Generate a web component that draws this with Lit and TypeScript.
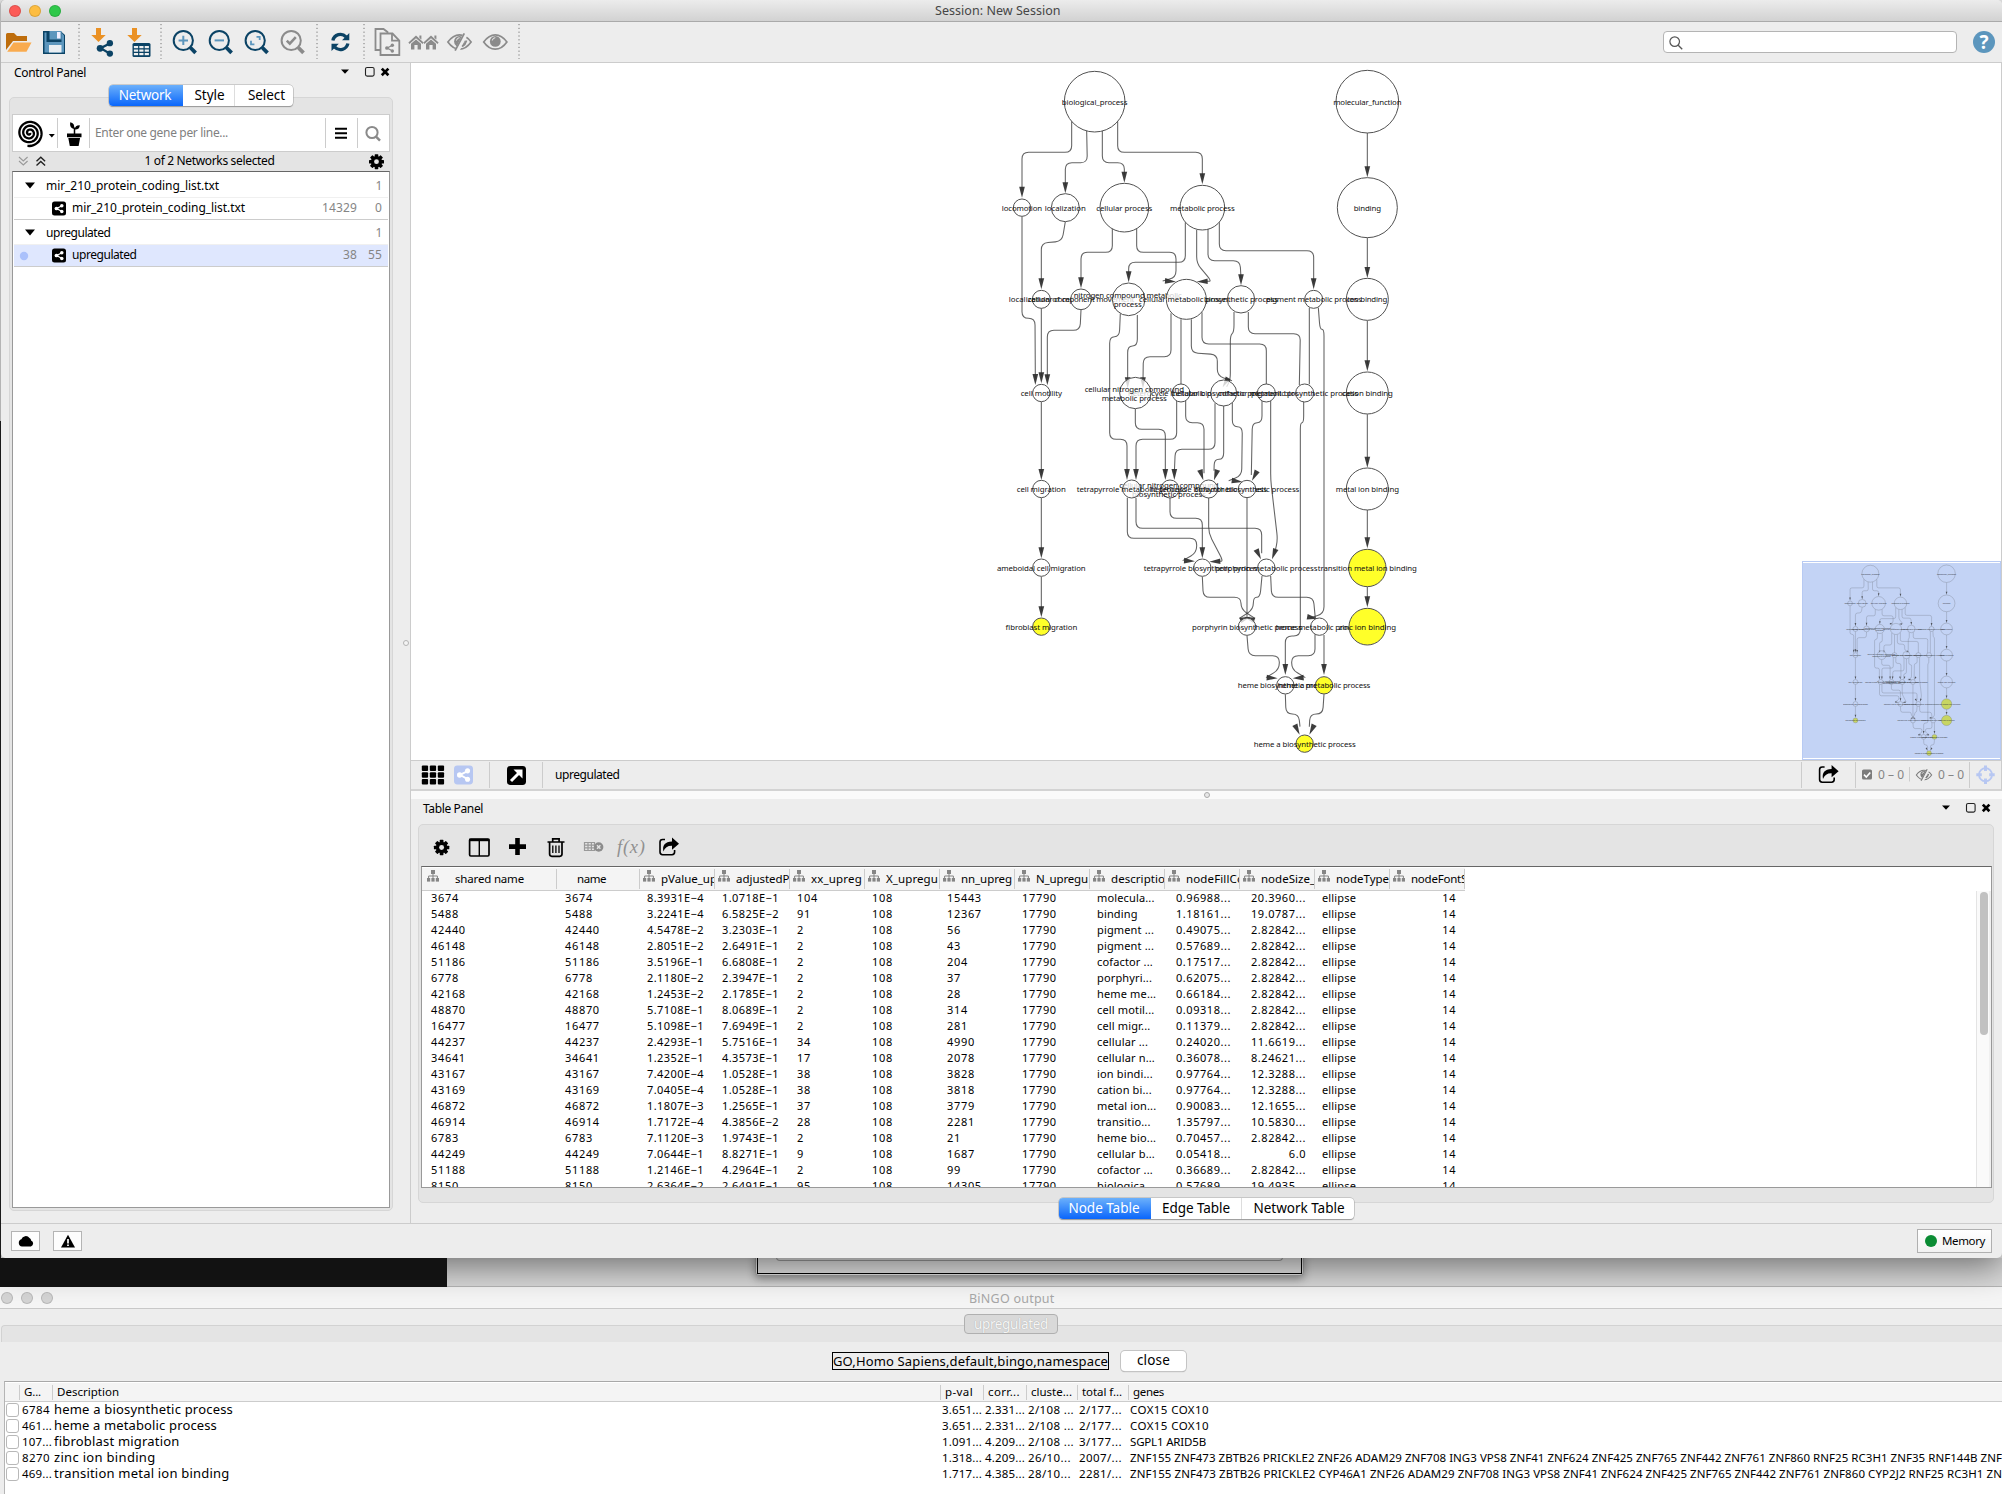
import { LitElement, html, svg, css } from "lit";
import { customElement } from "lit/decorators.js";

const FACE = '"Noto Sans", "Open Sans", sans-serif';
const UI_FACE = 'Inter, Roboto, sans-serif';

/* Letter spacing that brings a run of text to a given width. */
const pen = document.createElement("canvas").getContext("2d")!;
function fit(text: string, width: number, size: number, cls = "", face = FACE) {
  pen.font = `${size}px ${face}`;
  const gap = (width - pen.measureText(text).width) / text.length;
  return html`<span class="fit ${cls}" style="font-size:${size}px;letter-spacing:${gap.toFixed(3)}px">${text}</span>`;
}

/* Icon cut from a shared coordinate space. */
function ic(x: number, y: number, w: number, h: number, body: unknown) {
  return html`<svg class="ic" width=${w} height=${h} viewBox="${x} ${y} ${w} ${h}">${body}</svg>`;
}

type Pt = [number, number];
function round(pts: Pt[], r = 20) {
  let d = `M${pts[0][0]} ${pts[0][1]}`;
  for (let i = 1; i < pts.length - 1; i++) {
    const [a, b, c] = [pts[i - 1], pts[i], pts[i + 1]];
    const la = Math.hypot(a[0] - b[0], a[1] - b[1]);
    const lc = Math.hypot(c[0] - b[0], c[1] - b[1]);
    const ra = Math.min(r, la / 2), rc = Math.min(r, lc / 2);
    d += `L${b[0] + ((a[0] - b[0]) * ra) / la} ${b[1] + ((a[1] - b[1]) * ra) / la}`;
    d += `Q${b[0]} ${b[1]} ${b[0] + ((c[0] - b[0]) * rc) / lc} ${b[1] + ((c[1] - b[1]) * rc) / lc}`;
  }
  const e = pts[pts.length - 1];
  return d + `L${e[0]} ${e[1]}`;
}

interface Edge { p: Pt[]; tip?: [number, number, number]; }
const E = (p: Pt[], tip?: [number, number, number]): Edge => ({ p, tip });
const down = (...p: Pt[]): Edge => {
  const e = p[p.length - 1];
  return { p: [...p.slice(0, -1), [e[0], e[1] - 22]], tip: [e[0], e[1], 90] };
};

const edges: Edge[] = [
  down([275, 214], [275, 307], [126, 307], [126, 443]),
  down([320, 243], [322, 338], [256, 338], [256, 430]),
  down([367, 243], [367, 338], [433, 338], [433, 398]),
  down([413, 214], [413, 307], [667, 307], [667, 403]),
  down([1162, 249], [1162, 382]),
  down([1162, 563], [1162, 684]),
  down([1162, 812], [1162, 964]),
  down([1162, 1093], [1162, 1253]),
  down([1162, 1380], [1162, 1495]),
  down([1162, 1611], [1162, 1672]),
  down([126, 500], [126, 805], [165, 805], [166, 1005]),
  down([256, 515], [246, 574], [184, 579], [184, 718]),
  down([397, 536], [397, 607], [303, 607], [303, 715]),
  E([[470, 536], [470, 607], [588, 607], [588, 682], [548, 693]], [588, 695, 4]),
  down([616, 517], [616, 637], [446, 637], [446, 697]),
  E([[650, 540], [650, 640], [695, 694], [680, 694]], [650, 695, 178]),
  down([684, 537], [684, 632], [780, 632], [783, 706]),
  down([718, 517], [718, 602], [1001, 602], [1001, 718]),
  down([184, 775], [184, 1000]),
  down([303, 780], [300, 841], [202, 841], [202, 1006]),
  down([421, 790], [418, 860], [389, 860], [389, 1168], [441, 1168], [441, 1290]),
  down([472, 795], [472, 888], [443, 888], [443, 1015]),
  down([573, 790], [573, 920], [490, 920], [489, 1015]),
  E([[603, 808], [603, 1003]]),
  E([[634, 808], [634, 908], [712, 914], [712, 978], [756, 992]], [728, 1012, 120]),
  E([[666, 787], [666, 882], [859, 882], [859, 1003]]),
  E([[762, 786], [762, 846], [751, 856], [751, 990], [740, 1010]]),
  E([[805, 786], [805, 851], [961, 851], [958, 1005]]),
  E([[988, 773], [988, 1003]]),
  E([[1015, 773], [1020, 838], [1032, 838], [1032, 1690], [990, 1704]], [1014, 1706, 10]),
  down([184, 1056], [184, 1290]),
  down([184, 1343], [184, 1525]),
  down([184, 1580], [184, 1702]),
  down([466, 1077], [466, 1138], [556, 1138], [556, 1290]),
  down([590, 1053], [590, 1168], [468, 1168], [468, 1290]),
  E([[617, 1053], [617, 1118], [672, 1118], [672, 1270]], [670, 1291, 72]),
  down([705, 1060], [705, 1198], [586, 1198], [583, 1290]),
  E([[731, 1067], [731, 1228], [703, 1228], [702, 1262]], [702, 1291, 108]),
  E([[757, 1058], [757, 1130], [787, 1130], [785, 1277], [746, 1292]], [788, 1296, 8]),
  E([[846, 1053], [846, 1118], [817, 1118], [814, 1275]], [816, 1292, 118]),
  E([[872, 1053], [872, 1290], [893, 1470], [885, 1505]], [876, 1528, 110]),
  down([971, 1056], [971, 1118], [961, 1118], [961, 1758], [916, 1758], [916, 1875]),
  E([[442, 1343], [442, 1465], [650, 1465], [650, 1508], [608, 1532]], [645, 1534, 4]),
  E([[468, 1343], [468, 1435], [845, 1435], [845, 1510]], [843, 1528, 64]),
  down([570, 1343], [570, 1405], [667, 1405], [667, 1525]),
  E([[686, 1343], [686, 1450], [730, 1534], [715, 1534]], [688, 1535, 178]),
  E([[801, 1343], [801, 1705]]),
  E([[667, 1580], [670, 1642], [783, 1642], [783, 1678], [825, 1705]], [792, 1700, 200]),
  E([[846, 1578], [840, 1642], [820, 1642], [820, 1678], [778, 1705]], [812, 1700, -20]),
  E([[872, 1578], [875, 1642], [1000, 1642], [1006, 1705]]),
  E([[801, 1757], [806, 1817], [898, 1817], [898, 1858], [858, 1883]], [893, 1885, 4]),
  E([[1005, 1753], [1005, 1817], [935, 1817], [935, 1858], [976, 1883]], [938, 1885, 176]),
  down([1032, 1755], [1032, 1875]),
  E([[916, 1933], [918, 1992], [956, 1992], [960, 2030]], [959, 2054, 64]),
  E([[1032, 1933], [1028, 1992], [990, 1992], [988, 2030]], [988, 2054, 116]),
];

type Line = [string, number, number, number]; // text, centre x, centre y, width
interface GNode { x: number; y: number; r: number; hot?: boolean; t: Line[]; }
const n = (x: number, y: number, r: number, s: string, w: number, hot = false): GNode =>
  ({ x, y, r, hot, t: [[s, x, y, w]] });

const nodes: GNode[] = [
  n(344, 155, 91, "biological_process", 197),
  n(1162, 155, 94, "molecular_function", 205),
  n(126, 473, 26, "locomotion", 121),
  n(256, 473, 42, "localization", 123),
  n(433, 473, 73, "cellular process", 168),
  n(667, 473, 67, "metabolic process", 194),
  n(1162, 473, 90, "binding", 82),
  n(1162, 748, 63, "ion binding", 120),
  n(1162, 1029, 63, "cation binding", 153),
  n(184, 748, 27, "localization of cell", 196),
  n(303, 748, 31, "cellular component movement", 320),
  { x: 446, y: 748, r: 49, t: [["nitrogen compound metabolic", 443, 736, 324], ["process", 443, 762, 84]] },
  n(619, 748, 60, "cellular metabolic process", 284),
  n(783, 748, 41, "biosynthetic process", 222),
  n(1001, 748, 27, "pigment metabolic process", 288),
  n(184, 1029, 26, "cell motility", 124),
  n(603, 1029, 27, "heterocycle metabolic process", 318),
  { x: 466, y: 1029, r: 47, t: [["cellular nitrogen compound", 463, 1017, 298], ["metabolic process", 463, 1043, 195]] },
  n(731, 1029, 39, "cellular biosynthetic process", 310),
  n(859, 1029, 27, "cofactor metabolic process", 290),
  n(974, 1029, 27, "pigment biosynthetic process", 322),
  n(184, 1317, 26, "cell migration", 147),
  { x: 570, y: 1317, r: 27, t: [["cellular nitrogen compound", 567, 1305, 298], ["biosynthetic process", 567, 1331, 222]] },
  n(455, 1317, 27, "tetrapyrrole metabolic process", 330),
  n(686, 1317, 27, "heterocycle biosynthetic process", 350),
  n(801, 1317, 26, "cofactor biosynthetic process", 314),
  n(1162, 1317, 63, "metal ion binding", 190),
  n(184, 1553, 26, "ameboidal cell migration", 266),
  n(667, 1553, 26, "tetrapyrrole biosynthetic process", 352),
  n(859, 1553, 26, "porphyrin metabolic process", 307),
  n(1162, 1554, 56, "transition metal ion binding", 297, true),
  n(184, 1730, 26, "fibroblast migration", 215, true),
  n(801, 1730, 26, "porphyrin biosynthetic process", 330),
  n(1018, 1730, 26, "heme metabolic process", 262),
  n(1162, 1730, 55, "zinc ion binding", 173, true),
  n(916, 1906, 26, "heme biosynthetic process", 286),
  n(1032, 1906, 26, "heme a metabolic process", 278, true),
  n(974, 2081, 26, "heme a biosynthetic process", 306, true),
];

function graph(mini = false) {
  return svg`
    <g fill="none" stroke="#3c3c3c" stroke-opacity=".8" stroke-width="3.2">
      ${edges.map((e) => svg`<path d=${round(e.p)}/>`)}
    </g>
    <g fill="#2c2c2c" fill-opacity=".92">
      ${edges.filter((e) => e.tip).map((e) => svg`<path d="M0 0L-33 8.5L-33 -8.5Z" transform="translate(${e.tip![0]} ${e.tip![1]}) rotate(${e.tip![2]})"/>`)}
    </g>
    ${nodes.map((k) => svg`
      <circle cx=${k.x} cy=${k.y} r=${k.r} fill=${k.hot ? (mini ? "#c8d638" : "#ffff1e") : (mini ? "#c3d3f5" : "#ffffff")} fill-opacity=${k.hot ? 0.95 : 0.78} stroke="#505050" stroke-width="3"/>
      ${k.t.map((t) => svg`<text x=${t[1] - t[3] / 2} y=${t[2] + 9} textLength=${t[3]} font-size="23.5" fill="#111">${t[0]}</text>`)}`)}`;
}

const NAVY = "#0b4365", BLUE = "#5c96bd", ORANGE = "#ea9124", GREY = "#8b8b8b";

const share = (x: number, y: number, s: number, c: string) => svg`
  <g transform="translate(${x} ${y}) scale(${s})" fill=${c} stroke=${c}>
    <path d="M13 4.2L4.5 8.5L13 13.4" fill="none" stroke-width="2.2"/>
    <circle cx="13.6" cy="3.6" r="3.1" stroke="none"/><circle cx="4" cy="8.6" r="3.3" stroke="none"/><circle cx="13.6" cy="13.8" r="3.1" stroke="none"/>
  </g>`;
const importArrow = (x: number) => svg`<path d="M${x - 2.5} 28h5v7h4.7L${x} 42L${x - 7.2} 35h4.7z" fill=${ORANGE}/>`;
const lens = (x: number, c: string, inner: unknown) => svg`
  <circle cx=${x} cy="40.5" r="9.6" fill="none" stroke=${c} stroke-width="2"/>
  <path d="M${x + 7} 47.5L${x + 12.3} 52.8" stroke=${c} stroke-width="3.8" fill="none"/>${inner}`;
const sep = (x: number) => ic(x, 22, 10, 40, svg`<path d="M${x + 5} 24v35" stroke="#777" stroke-width="1" stroke-dasharray="1.2 2.6"/>`);
const eye = (cx: number, cy: number, s: number, c: string, slash: boolean) => svg`
  <g transform="translate(${cx} ${cy}) scale(${s})">
    <path d="M-11.6 0Q-6.5 -7.2 0 -7.2T11.6 0Q6.5 7.2 0 7.2T-11.6 0Z" fill="none" stroke=${c} stroke-width="1.7"/>
    <circle r="5.4" cy="-.6" fill=${c}/><path d="M-3 -1.5A3.2 3.2 0 0 1 0 -4.3" stroke="#eee" fill="none"/>
    ${slash ? svg`<path d="M6.5 -9L-2.5 9" stroke="#eee" stroke-width="4.6"/><path d="M4.8 -8.6L-4.4 8.6" stroke=${c} stroke-width="1.8"/><path d="M7 -1.5Q6 2.5 2.6 4.6" stroke=${c} stroke-width="1.8" fill="none"/>` : ""}
  </g>`;
const gear = (cx: number, cy: number, r: number) => svg`
  <g transform="translate(${cx} ${cy}) scale(${r / 7.5})">
    ${[0, 45, 90, 135].map((a) => svg`<rect x="-1.8" y="-7.5" width="3.6" height="15" rx=".6" transform="rotate(${a})"/>`)}
    <path fill-rule="evenodd" d="M-5.6 0a5.6 5.6 0 1 0 11.2 0a5.6 5.6 0 1 0 -11.2 0M-2.4 0a2.4 2.4 0 1 1 4.8 0a2.4 2.4 0 1 1 -4.8 0"/>
    <circle r="2.4" class="hole"/>
  </g>`;
const exportIcon = (x: number, y: number) => svg`
  <path d="M${x + 6} ${y + 2}h-2.4q-2.6 0-2.6 2.6v10q0 2.6 2.6 2.6h9.4q2.6 0 2.6-2.6v-2" fill="none" stroke="#000" stroke-width="1.6"/>
  <path d="M${x + 4.4} ${y + 14}q-2-9.4 8.6-10v-4l7 6.2l-7 6v-4q-6.4-.2-8.6 5.8z"/>`;
const tree = html`<svg class="tree" width="12" height="12" viewBox="0 0 12 12"><g fill="#858585"><rect x="4" y="0" width="4" height="4"/><rect x="0" y="8" width="3.2" height="3.6"/><rect x="4.4" y="8" width="3.2" height="3.6"/><rect x="8.8" y="8" width="3.2" height="3.6"/></g><path d="M6 3v5M1.6 8V6h8.8v2" fill="none" stroke="#858585"/></svg>`;
const panelIcons = html`<svg class="ic" width="54" height="16" viewBox="339 65 54 16">
  <path d="M341 70.5h8l-4 4.3z"/><rect x="365.5" y="68.5" width="8.6" height="8.6" rx="1.6" fill="none" stroke="#222" stroke-width="1.1"/>
  <path d="M381.8 69.6l6.6 6.6M388.4 69.6l-6.6 6.6" stroke="#000" stroke-width="2.7"/></svg>`;

const cols = ["pValue_up", "adjustedP'", "xx_upreg", "X_upregu", "nn_upreg", "N_upregu", "descriptio", "nodeFillCo", "nodeSize_", "nodeType", "nodeFontS"];
const rows: string[][] = `3674|8.3931E-4|1.0718E-1|104|15443|molecula...|0.96988...|20.3960...
5488|3.2241E-4|6.5825E-2|91|12367|binding|1.18161...|19.0787...
42440|4.5478E-2|3.2303E-1|2|56|pigment ...|0.49075...|2.82842...
46148|2.8051E-2|2.6491E-1|2|43|pigment ...|0.57689...|2.82842...
51186|3.5196E-1|6.6808E-1|2|204|cofactor ...|0.17517...|2.82842...
6778|2.1180E-2|2.3947E-1|2|37|porphyri...|0.62075...|2.82842...
42168|1.2453E-2|2.1785E-1|2|28|heme me...|0.66184...|2.82842...
48870|5.7108E-1|8.0689E-1|2|314|cell motil...|0.09318...|2.82842...
16477|5.1098E-1|7.6949E-1|2|281|cell migr...|0.11379...|2.82842...
44237|2.4293E-1|5.7516E-1|34|4990|cellular ...|0.24020...|11.6619...
34641|1.2352E-1|4.3573E-1|17|2078|cellular n...|0.36078...|8.24621...
43167|7.4200E-4|1.0528E-1|38|3828|ion bindi...|0.97764...|12.3288...
43169|7.0405E-4|1.0528E-1|38|3818|cation bi...|0.97764...|12.3288...
46872|1.1807E-3|1.2565E-1|37|3779|metal ion...|0.90083...|12.1655...
46914|1.7172E-4|4.3856E-2|28|2281|transitio...|1.35797...|10.5830...
6783|7.1120E-3|1.9743E-1|2|21|heme bio...|0.70457...|2.82842...
44249|7.0644E-1|8.8271E-1|9|1687|cellular b...|0.05418...|6.0
51188|1.2146E-1|4.2964E-1|2|99|cofactor ...|0.36689...|2.82842...
8150|2.6364E-2|2.6491E-1|95|14305|biologica...|0.57689...|19.4935...`
  .split("\n").map((l) => l.replace(/E-/g, "E\u2212").split("|"));

const G1 = "ZNF155 ZNF473 ZBTB26 PRICKLE2 ZNF26 ADAM29 ZNF708 ING3 VPS8 ZNF41 ZNF624 ZNF425 ZNF765 ZNF442 ZNF761 ZNF860 RNF25 RC3H1 ZNF35 RNF144B";
const G2 = "ZNF155 ZNF473 ZBTB26 PRICKLE2 CYP46A1 ZNF26 ADAM29 ZNF708 ING3 VPS8 ZNF41 ZNF624 ZNF425 ZNF765 ZNF442 ZNF761 ZNF860 CYP2J2 RNF25 RC3H1";
const results: [string, string, number, string, string, string, string, string, number][] = [
  ["6784", "heme a biosynthetic process", 179, "3.651...", "2.331...", "2/108 ...", "2/177...", "COX15 COX10", 79],
  ["461...", "heme a metabolic process", 163, "3.651...", "2.331...", "2/108 ...", "2/177...", "COX15 COX10", 79],
  ["107...", "fibroblast migration", 125.5, "1.091...", "4.209...", "2/108 ...", "3/177...", "SGPL1 ARID5B", 76],
  ["8270", "zinc ion binding", 101.5, "1.318...", "4.209...", "26/10...", "2007/...", G1, 849.5],
  ["469...", "transition metal ion binding", 175.5, "1.717...", "4.385...", "28/10...", "2281/...", G2, 854],
];

@customElement("app-root")
export class AppRoot extends LitElement {
  static styles = css`
    :host { display: block; width: 2002px; height: 1494px; overflow: hidden; font-family: "Noto Sans", "Open Sans", sans-serif; font-size: 11px; color: #000; background: #ededed; }
    * { box-sizing: border-box; }
    .fit { white-space: pre; line-height: 1; display: inline-block; }
    .ic { display: block; flex: none; }
    .main { position: relative; z-index: 1; width: 2002px; height: 1258px; background: #ededed; border-left: 1px solid #b5b5b5; border-radius: 5px 5px 5px 5px; display: flex; flex-direction: column; border-bottom: 0; box-shadow: 0 8px 34px rgba(0,0,0,.5); }
    .title { height: 22px; flex: none; background: linear-gradient(#ececec, #d2d2d2); border-bottom: 1px solid #aaa; border-radius: 5px 5px 0 0; display: grid; grid-template-columns: 934px 1fr; align-items: center; }
    .title .fit { color: #464646; position: relative; top: 1px; }
    .lights { display: flex; gap: 8px; padding-left: 8px; }
    .lights i { width: 12px; height: 12px; border-radius: 50%; background: #fc5b57; box-shadow: inset 0 0 0 1px rgba(0,0,0,.13); }
    .lights i:nth-child(2) { background: #fdbd41; } .lights i:nth-child(3) { background: #2fc84a; }
    .tools { height: 41px; flex: none; border-bottom: 1px solid #ccc; display: flex; }
    .grow { flex: 1; }
    .search { width: 294px; height: 22px; margin-top: 9px; border: 1px solid #b4b4b4; border-radius: 4px; background: #fff; }
    .help { width: 22px; height: 22px; border-radius: 50%; background: #5c96bd; color: #fff; font: bold 19px/22px "Open Sans", sans-serif; text-align: center; margin: 9px 7px 0 16px; }
    .body { flex: 1; min-height: 0; display: grid; grid-template-columns: 410px 1fr; }
    .left { border-right: 1px solid #ccc; padding-left: 8px; display: flex; flex-direction: column; }
    .phead { display: flex; justify-content: space-between; height: 22px; padding: 1px 17px 0 5px; }
    .phead .fit { margin-top: 3px; }
    .tabs { display: flex; height: 21px; border-radius: 4px; background: #fff; box-shadow: 0 0 0 .5px #a9a9a9, 0 1px 1px rgba(0,0,0,.4); overflow: hidden; position: relative; z-index: 1; }
    .tabs span.tab { display: flex; align-items: center; justify-content: center; border-right: 1px solid #ddd; }
    .tabs span.tab:last-child { border: 0; padding-left: 2px; }
    .tabs .tab.on { background: linear-gradient(#6bb0fb, #0a66fb); color: #fff; border: 0; padding-right: 2px; }
    .t1 { width: 184px; margin: 0 0 -9px 100px; display: grid; grid-template-columns: 74px 52px 58px; }
    .t1 .tab:nth-child(2) { padding-left: 2px; }
    .t1 span.tab:last-child { padding-left: 5px; }
    .frame { background: #e4e4e4; border: 1px solid #d6d6d6; border-radius: 5px; }
    .f1 { width: 384px; height: 1114px; padding: 16px 2px 2px; display: flex; flex-direction: column; }
    .gene { height: 38px; border: 1px solid #ccc; background: #fff; display: grid; grid-template-columns: 45px 32px 236px 32px 1fr; align-items: center; flex: none; }
    .gene > * { height: 30px; border-right: 1px solid #ccc; display: flex; align-items: center; }
    .gene > *:last-child { border: 0; }
    .gene .fit { color: #808080; padding-left: 5px; }
    .count { height: 19px; flex: none; display: flex; align-items: center; justify-content: space-between; }
    .count .fit { margin: -1px -2px 0 0; }
    .hole { fill: #e4e4e4; }
    .list { flex: 1; background: #fff; border: 1px solid #999; border-top-color: #666; padding: 1px 1px 0; }
    .net { display: grid; grid-template-columns: 1fr auto; height: 25px; align-items: center; border-bottom: 1px solid #f0f0f0; padding: 1px 6px 0 0; }
    .net.leaf { height: 22px; border-bottom-color: #ccc; padding-top: 0; }
    .net.leaf .fit { margin-top: -1px; }
    .net.sel { background: #dfe7fe; }
    .net > div { display: flex; align-items: center; }
    .num { color: #858585; }
    .num .fit:nth-child(2) { min-width: 25px; text-align: right; }
    .right { min-width: 0; display: flex; flex-direction: column; }
    .view { height: 698px; flex: none; position: relative; background: #fff; border-bottom: 1px solid #ccc; border-right: 1px solid #ccc; }
    .view > svg { display: block; }
    svg text { font-family: "Noto Sans", "Open Sans", sans-serif; }
    .mini { position: absolute; right: 0; bottom: 0; width: 199px; height: 199px; background: #c3d3f5; border: 1px solid #b7caf3; box-shadow: inset 0 1px #fff, inset 0 -1px #fff; }
    .mini svg { display: block; }
    .vbar { height: 30px; flex: none; display: flex; align-items: center; border-bottom: 2px solid #d3d3d3; border-right: 1px solid #ccc; }
    .v { width: 1px; height: 26px; background: #ccc; flex: none; }
    .vname { padding-left: 12px; display: flex; }
    .cnt { color: #858585; }
    .split { height: 8px; flex: none; background: #fafafa; display: flex; justify-content: center; align-items: center; }
    .split i { width: 6px; height: 6px; border-radius: 50%; border: 1px solid #aaa; background: #e8e8e8; }
    .vsplit { position: absolute; left: 402px; top: 640px; width: 6px; height: 6px; border-radius: 50%; border: 1px solid #b4b4b4; background: #f4f4f4; }
    .thead { display: flex; justify-content: space-between; height: 25px; padding: 1px 8px 0 12px; }
    .thead .fit { margin-top: 3px; }
    .f2 { margin: 0 8px 0 7px; height: 379px; flex: none; padding: 0 1px 0 2px; }
    .ttools { height: 41px; display: flex; align-items: center; padding-top: 3px; }
    .table { height: 322px; border: 1px solid #999; border-top-color: #666; background: #fff; overflow: hidden; display: grid; grid-template-columns: 1fr 15px; }
    .hr, .row { display: grid; grid-template-columns: 135px 83px repeat(11, 75px); width: 1043px; }
    .hr { height: 24px; background: #f4f4f4; border-bottom: 1px solid #ccc; border-top: 1px solid #fff; }
    .hc { border-right: 1px solid #ccc; height: 20px; margin-top: 1px; overflow: hidden; white-space: nowrap; display: flex; padding-left: 3px; }
    .hc .fit { margin: 4px 0 0 6px; line-height: 12px; }
    .hc:first-child .fit { margin-left: 16px; } .hc:first-child { padding-left: 5px; }
    .tree { flex: none; margin-top: 1px; }
    .hc.nm .fit { margin-left: 17px; }
    .row { height: 16px; line-height: 13px; }
    .row span { padding-left: 7px; white-space: nowrap; letter-spacing: .67px; }
    .row span:first-child { padding-left: 9px; } .row span:nth-child(2) { padding-left: 8px; }
    .row span.exp { letter-spacing: .42px; }
    .row span.txt { letter-spacing: .15px; }
    .row span.r { text-align: right; padding-right: 9px; letter-spacing: .55px; }
    .bar { border-left: 1px solid #e4e4e4; border-right: 2px solid #f0f0f0; background: #fafafa; margin-top: 24px; padding: 1px 3px; }
    .bar i { display: block; width: 8px; height: 143px; border-radius: 4px; background: #c1c1c1; }
    .t2 { width: 295px; margin: -5px 0 0 648px; display: grid; grid-template-columns: 92px 91px 112px; flex: none; }
    .status { height: 35px; flex: none; border-top: 1px solid #ccc; display: flex; align-items: center; padding: 0 10px 1px 10px; }
    .sb { width: 29px; height: 20px; border: 1px solid #b4b4b4; background: #fdfdfd; margin-right: 13px; display: flex; align-items: center; justify-content: center; }
    .mem { width: 75px; height: 24px; border: 1px solid #b0b0b0; background: linear-gradient(#fff, #f2f2f2); display: flex; align-items: center; padding-left: 7px; gap: 5px; }
    .mem i { width: 12px; height: 12px; border-radius: 50%; background: #0b8c34; }
    .behind { height: 29px; display: grid; grid-template-columns: 447px 1fr; position: relative; }
    .dark { background: #121212; z-index: 2; } 
    .desk { background: #d9d9d9; border-bottom: 1px solid #b5b5b5; }
    .dialog { position: absolute; left: 755px; top: -6px; width: 549px; height: 24px; border: 1px solid #a0a0a0; border-radius: 0 0 4px 4px; background: #e6e6e6; padding: 0 1px 2px; box-shadow: 0 3px 9px rgba(0,0,0,.35); }
    .dialog div { height: 21px; border: 1px solid #000; border-top: 0; padding: 0 18px; }
    .dialog b { display: block; height: 8px; border: 1px solid #a0a0a0; border-top: 0; border-radius: 0 0 4px 4px; }
    .edge { position: absolute; z-index: 3; left: 0; top: 421px; width: 1px; height: 837px; background: #1a1a1a; }
    .bingo { height: 207px; background: #ededed; display: flex; flex-direction: column; }
    .btitle { height: 22px; background: #f5f5f5; border-bottom: 1px solid #c8c8c8; display: grid; grid-template-columns: 969px 1fr; align-items: center; flex: none; }
    .btitle .fit { color: #a5a5a5; position: relative; z-index: 2; top: 2px; }
    .btitle .lights { padding-left: 1px; } .btitle .lights i { background: #d4d4d4 !important; }
    .btab { width: 94px; height: 20px; margin: 5px 0 -9px 964px; border: 1px solid #b0b0b0; border-radius: 4px; background: #d9d9d9; color: #f6f6f6; text-shadow: 0 0 1px #999; display: flex; justify-content: center; padding-top: 3px; z-index: 2; position: relative; flex: none; }
    .band { height: 17px; margin-left: 1px; background: #e4e4e4; border-top: 1px solid #d2d2d2; border-left: 1px solid #d2d2d2; border-radius: 4px 0 0 0; flex: none; }
    .bform { height: 39px; display: flex; padding: 10px 0 0 832px; flex: none; }
    .field { width: 277px; height: 18px; border: 1px solid #000; overflow: hidden; padding-top: 1px; line-height: 14px; margin-right: 12px; }
    .field .fit { line-height: 14px; display: block; }
    .close { width: 65px; height: 20px; margin-top: -1px; background: #fff; border-radius: 4px; box-shadow: 0 0 0 1px #c4c4c4, 0 1px 1px #999; display: flex; justify-content: center; align-items: center; padding-bottom: 1px; }
    .btable { flex: 1; margin-left: 4px; border-left: 1px solid #b5b5b5; border-top: 1px solid #a8a8a8; background: #fff; overflow: hidden; padding-top: 1px; }
    .bh, .br { display: grid; grid-template-columns: 15px 33px 888px 43px 43px 51px 51px 873px; }
    .bh { height: 19px; background: #f4f4f4; border-bottom: 1px solid #ccc; align-items: center; }
    .bh > span { height: 15px; border-right: 1px solid #ccc; padding: 0 0 0 4px; display: flex; align-items: center; }
    .bh > span:last-child { border: 0; }
    .br { height: 16px; }
    .br > * { height: 16px; white-space: nowrap; display: flex; align-items: center; padding-bottom: 1px; }
    .br .chk { width: 13px; height: 14px; border: 1px solid #b8b8b8; border-radius: 3px; background: #fff; margin: 1px 0 0 1px; padding: 0; }
    .br .id { padding-left: 2px; } .br .ds { padding-left: 1px; } .br .c { padding-left: 1px; }
    .over { overflow: hidden; }
  `;

  private toolbar() {
    return html`<div class="tools">
      ${ic(1, 22, 35, 40, svg`<path d="M6 50V34.5q0-1.5 1.5-1.5H14l3 3h10v5H13z" fill="#be6d0c"/><path d="M7.2 51.8L13.5 42.5H31.5L26.5 51.8z" fill="#f9ab4f"/>`)}
      ${ic(36, 22, 37.5, 40, svg`<path d="M43 31h17.5l4.5 4v19H43z" fill=${NAVY}/><path d="M44.5 32.5h2v9.5h15v-9.5l2.5 3v17h-19.5z" fill=${BLUE}/><path d="M49.5 31h12v8.5h-12z" fill=${BLUE}/><path d="M57 32h3.5v6.5H57z" fill="#eef"/><path d="M49 45h12.5v7.5H49z" fill="#e9eef2"/>`)}
      ${sep(73.5)}
      ${ic(83.5, 22, 37, 40, svg`${importArrow(98)}${share(95.5, 39.5, 1.02, NAVY)}`)}
      ${ic(120.5, 22, 35.5, 40, svg`${importArrow(134)}<rect x="132" y="43" width="18" height="14" rx="1.5" fill=${NAVY}/><g fill="#f0f0f0">${[0, 1, 2].map((r) => [0, 1, 2].map((c) => svg`<rect x=${133.4 + c * 5.4} y=${46 + r * 3.5} width="4.2" height="2.2"/>`))}</g>`)}
      ${sep(156)}
      ${ic(166, 22, 36, 40, lens(183.3, NAVY, svg`<path d="M183.3 35.7v9.4M178.6 40.4h9.4" stroke=${BLUE} stroke-width="2"/>`))}
      ${ic(202, 22, 36, 40, lens(219.3, NAVY, svg`<path d="M214.6 40.4h9.4" stroke=${BLUE} stroke-width="2"/>`))}
      ${ic(238, 22, 36, 40, lens(255.2, NAVY, svg`<path d="M256.5 36.8h3.2v3.2M251 40.8v3.6h3.4" fill="none" stroke=${BLUE} stroke-width="1.8"/>`))}
      ${ic(274, 22, 37.5, 40, lens(291.2, GREY, svg`<path d="M286.8 40.6l3 3l6-6.4" fill="none" stroke=${GREY} stroke-width="2.6"/>`))}
      ${sep(311.5)}
      ${ic(321.5, 22, 37, 40, svg`<g fill="none" stroke=${NAVY} stroke-width="3.3"><path d="M332.4 40.5A7.7 7.7 0 0 1 345.5 36.8"/><path d="M347.4 43.5A7.7 7.7 0 0 1 334.3 47.2"/></g><path d="M348.8 33v7.3h-7.3zM331 51v-7.3h7.3z" fill=${NAVY}/>`)}
      ${sep(358.5)}
      ${ic(368.5, 22, 36, 40, svg`<g fill="#eee" stroke=${GREY} stroke-width="1.8"><path d="M375 29h8l4 3v18h-12z"/><path d="M380 33.5h12l6.8 7V55H380z"/><path d="M391.5 33.5v7.2h7" fill="none"/></g>${share(384.2, 43.2, 0.56, GREY)}`)}
      ${ic(404.5, 22, 37, 40, svg`<g fill=${GREY}>${[415.5, 430.5].map((x) => svg`<path d="M${x - 7.6} 42.6L${x} 35.5L${x + 7.6} 42.6L${x + 6.6} 44L${x} 38.2L${x - 6.6} 44z"/><path d="M${x - 5} 43.8L${x} 39.6L${x + 5} 43.8V49.5H${x + 1.6}V45H${x - 1.6}V49.5H${x - 5}zM${x + 3.4} 35.5h2v4l-2-1.6z"/>`)}</g>`)}
      ${ic(441.5, 22, 35, 40, eye(459, 42, 1, GREY, true))}
      ${ic(476.5, 22, 37, 40, eye(494.8, 42, 1, GREY, false))}
      ${sep(513.5)}
      <div class="grow"></div>
      <div class="search">${ic(1664, 31, 24, 20, svg`<circle cx="1674.7" cy="40.6" r="4.8" fill="none" stroke="#555" stroke-width="1.2"/><path d="M1678.2 44.2l4 4" stroke="#555" stroke-width="1.3"/>`)}</div>
      <div class="help">?</div>
    </div>`;
  }

  private net(label: string, w: number, nums: [string, number][], leaf = false, sel = false) {
    return html`<div class="net ${leaf ? "leaf" : ""} ${sel ? "sel" : ""}">
      <div>${leaf
        ? ic(14, 198, 58, 20, svg`${sel ? svg`<circle cx="24" cy="208" r="4.2" fill="#abc1fb"/>` : ""}<rect x="52" y="200.5" width="14" height="14" rx="2.5"/>${share(54.2, 202.7, 0.56, "#fff")}`)
        : ic(14, 176, 32, 20, svg`<path d="M25 182.5h10l-5 6z"/>`)}${fit(label, w, 12)}</div>
      <div class="num">${nums.map(([t, k]) => fit(t, k, 12))}</div>
    </div>`;
  }

  private left() {
    return html`<div class="left">
      <div class="phead">${fit("Control Panel", 72, 12)}${panelIcons}</div>
      <div class="tabs t1"><span class="tab on">${fit("Network", 52.7, 13.5)}</span><span class="tab">${fit("Style", 30, 13.5)}</span><span class="tab">${fit("Select", 37, 13.5)}</span></div>
      <div class="frame f1">
        <div class="gene">
          <div>${ic(13, 118, 43, 30, svg`<path d="${spiral(29.5, 133, 13.5)}" fill="none" stroke="#000" stroke-width="2.3"/><path d="M48.8 134h6l-3 3.4z"/>`)}</div>
          <div>${ic(58, 118, 30, 30, svg`<path d="M67 133.5h14.5v3.8H67zM68.3 138h11.8l-1.5 8h-8.8z"/><path d="M74.5 134v-6.5" stroke="#000" stroke-width="1.5"/><path d="M74.2 129q-5-1-4-6.8q4.8.8 4 6.8zM74.8 129.4q.3-4.4 5-4.2q0 4.3-5 4.2z"/>`)}</div>
          <div>${fit("Enter one gene per line...", 133, 12)}</div>
          <div>${ic(326, 118, 30, 30, svg`<path d="M335 128.8h12M335 133.2h12M335 137.7h12" stroke="#000" stroke-width="1.9"/>`)}</div>
          <div>${ic(358, 118, 30, 30, svg`<circle cx="372" cy="132.5" r="5.6" fill="none" stroke="#8a8a8a" stroke-width="2"/><path d="M376 136.6l4 4" stroke="#8a8a8a" stroke-width="2.5"/>`)}</div>
        </div>
        <div class="count">
          ${ic(12, 152, 40, 19, svg`<g fill="none" stroke-width="1.1"><path d="M19 157l4.3 4l4.3-4M19 161l4.3 4l4.3-4" stroke="#999"/><path d="M36.5 161.2l4.3-4l4.3 4M36.5 165.4l4.3-4l4.3 4" stroke="#222" stroke-width="1.4"/></g>`)}
          ${fit("1 of 2 Networks selected", 130, 12)}
          ${ic(367, 152, 25, 19, gear(378.5, 161.7, 7.5))}
        </div>
        <div class="list">
          ${this.net("mir_210_protein_coding_list.txt", 173, [["1", 6.5]])}
          ${this.net("mir_210_protein_coding_list.txt", 173, [["14329", 35], ["0", 7]], true)}
          ${this.net("upregulated", 64.5, [["1", 6.5]])}
          ${this.net("upregulated", 64.5, [["38", 14], ["55", 14]], true, true)}
        </div>
      </div>
    </div>`;
  }

  private tablePanel() {
    return html`
      <div class="thead">${fit("Table Panel", 60, 12)}${panelIcons}</div>
      <div class="frame f2">
        <div class="ttools">
          ${ic(421, 832, 40, 32, gear(441.6, 848.5, 7.7))}
          ${ic(461, 832, 37, 32, svg`<rect x="469.6" y="840" width="19.4" height="17" rx="1.2" fill="none" stroke="#000" stroke-width="1.7"/><path d="M469 841h20.5" stroke="#000" stroke-width="2.4"/><path d="M479.3 840v17" stroke="#000" stroke-width="1.4"/>`)}
          ${ic(498, 832, 40, 32, svg`<path d="M509 847.6h17M517.5 839v17" stroke="#000" stroke-width="4.6"/>`)}
          ${ic(538, 832, 38, 32, svg`<g fill="none" stroke="#000" stroke-width="1.7"><path d="M547.5 843h17M549.6 843.5v11.6q0 2.2 2.2 2.2h8q2.2 0 2.2-2.2v-11.6M552.7 842.5v-2.6h6.4v2.6"/><path d="M552.8 846.5v7.6M555.9 846.5v7.6M559 846.5v7.6" stroke-width="1.3"/></g>`)}
          ${ic(576, 832, 38, 32, svg`<g fill="none" stroke="#999" stroke-width="1.2"><path d="M584.5 843.5h10v8h-10zM584.5 846.2h10M584.5 848.8h10M588 843.5v8M591.4 843.5v8"/></g><circle cx="598.7" cy="848" r="4.7" fill="#8c8c8c"/><path d="M597 846.3l3.4 3.4M600.4 846.3l-3.4 3.4" stroke="#e4e4e4" stroke-width="1.4"/>`)}
          ${ic(614, 832, 36, 32, svg`<text class="fx" x="617" y="854" textLength="28" font-size="18.5" font-style="italic" fill="#909090" style="font-family:'Liberation Serif',serif">f(x)</text>`)}
          ${ic(650, 832, 40, 32, exportIcon(659, 838.5))}
        </div>
        <div class="table">
          <div>
            <div class="hr">
              <div class="hc">${tree}${fit("shared name", 69, 11.5)}</div>
              <div class="hc nm">${fit("name", 29, 11.5)}</div>
              ${cols.map((c, i) => html`<div class="hc">${tree}${fit(c, [56, 56, 51, 52, 51, 52, 54, 58, 54, 53, 56][i], 11.5)}</div>`)}
            </div>
            ${rows.map((r) => html`<div class="row">
              <span>${r[0]}</span><span>${r[0]}</span><span class="exp">${r[1]}</span><span class="exp">${r[2]}</span><span>${r[3]}</span><span>108</span><span>${r[4]}</span><span>17790</span><span class="txt">${r[5]}</span><span class="r">${r[6]}</span><span class="r">${r[7]}</span><span class="txt">ellipse</span><span class="r">14</span>
            </div>`)}
          </div>
          <div class="bar"><i></i></div>
        </div>
      </div>
      <div class="tabs t2"><span class="tab on">${fit("Node Table", 71, 13.5)}</span><span class="tab">${fit("Edge Table", 68, 13.5)}</span><span class="tab">${fit("Network Table", 91, 13.5)}</span></div>`;
  }

  render() {
    return html`
      <div class="main">
        <div class="title"><div class="lights"><i></i><i></i><i></i></div>${fit("Session: New Session", 131, 12.5, "", UI_FACE)}</div>
        ${this.toolbar()}
        <div class="body">
          ${this.left()}
          <div class="right">
            <div class="view">
              <svg width="1590" height="697" viewBox="411 63 1590 697"><g transform="translate(980 50) scale(.33333)">${graph()}</g></svg>
              <div class="mini"><svg width="197" height="197" viewBox="1803 562 197 197" opacity=".82"><g transform="translate(1564.4 545.3) scale(.2795)"><g transform="translate(980 50) scale(.33333)">${graph(true)}</g></g></svg></div>
            </div>
            <div class="vbar">
              ${ic(411, 761, 78, 28, svg`${[0, 1, 2].map((r) => [0, 1, 2].map((c) => svg`<rect x=${421.8 + c * 8} y=${765.6 + r * 6.7} width="6.3" height="5.4" rx="1"/>`))}<rect x="454" y="765.5" width="19" height="19" rx="3.4" fill="#b7c7f2"/>${share(456.4, 767.9, 0.82, "#fff")}`)}
              <div class="v"></div>
              ${ic(490, 761, 52, 28, svg`<rect x="507" y="766" width="19" height="19" rx="3.4"/><path d="M511 781l8-8" stroke="#fff" stroke-width="3"/><path d="M513.5 769.5h9v9z" fill="#fff"/>`)}
              <div class="v"></div>
              <div class="vname">${fit("upregulated", 64.5, 12)}</div>
              <div class="grow"></div>
              <div class="v"></div>
              ${ic(1802, 761, 53, 28, exportIcon(1818.6, 765))}
              <div class="v"></div>
              ${ic(1856, 761, 22, 28, svg`<rect x="1862" y="769.5" width="10" height="10" rx="1.6" fill="#7c7c7c"/><path d="M1864 774.6l2.3 2.4l4-4.6" fill="none" stroke="#fff" stroke-width="1.6"/>`)}
              ${fit("0 – 0", 26, 12, "cnt")}
              ${ic(1904, 761, 34, 28, svg`<path d="M1909.5 767v14.5" stroke="#ccc"/>${eye(1924, 775, 0.66, "#7c7c7c", true)}`)}
              ${fit("0 – 0", 26, 12, "cnt")}
              ${ic(1964, 761, 5, 28, "")}
              <div class="v"></div>
              ${ic(1970, 761, 31, 28, svg`<g stroke="#b7c7f2" fill="none"><circle cx="1985.5" cy="774.7" r="6.5" stroke-width="1.8"/><path d="M1985.5 765.5v5.5M1985.5 778.5v5.5M1976.3 774.7h5.5M1989.2 774.7h5.5" stroke-width="3"/></g>`)}
            </div>
            <div class="split"><i></i></div>
            ${this.tablePanel()}
          </div>
        </div>
        <div class="status">
          <div class="sb">${ic(0, 0, 18, 14, svg`<path d="M4.5 12.5a3.7 3.7 0 0 1-.6-7.2A4.6 4.6 0 0 1 12 4a3 3 0 0 1 1.6 2.6A3.1 3.1 0 0 1 13.4 12.5z" transform="translate(.5)"/>`)}</div>
          <div class="sb">${ic(0, 0, 18, 14, svg`<path d="M9 .8L16 13.4H2z"/><path d="M9 5v4.4M9 10.4v1.7" stroke="#fff" stroke-width="1.7"/>`)}</div>
          <div class="grow"></div>
          <div class="mem"><i></i>${fit("Memory", 43, 11.5)}</div>
        </div>
        <div class="vsplit"></div>
      </div>
      <div class="edge"></div>
      <div class="behind"><div class="dark"></div><div class="desk"></div><div class="dialog"><div><b></b></div></div></div>
      <div class="bingo">
        <div class="btitle"><div class="lights"><i></i><i></i><i></i></div>${fit("BiNGO output", 84, 12.5, "", UI_FACE)}</div>
        <div class="btab">${fit("upregulated", 74, 13.5)}</div>
        <div class="band"></div>
        <div class="bform"><div class="field">${fit("GO,Homo Sapiens,default,bingo,namespace", 275, 13)}</div><div class="close">${fit("close", 33, 13.5)}</div></div>
        <div class="btable">
          <div class="bh"><span></span><span>${fit("G...", 17, 11.5)}</span><span>${fit("Description", 62, 11.5)}</span><span>${fit("p-val", 28, 11.5)}</span><span>${fit("corr...", 32, 11.5)}</span><span>${fit("cluste...", 41, 11.5)}</span><span>${fit("total f...", 40, 11.5)}</span><span>${fit("genes", 31, 11.5)}</span></div>
          ${results.map((r) => html`<div class="br"><span class="chk"></span>
            <span class="id">${fit(r[0], r[0].includes(".") ? 30 : 28, 11.5)}</span>
            <span class="ds">${fit(r[1], r[2], 13)}</span>
            <span class="c">${fit(r[3], 40, 11.5)}</span><span class="c">${fit(r[4], 40, 11.5)}</span>
            <span class="c">${fit(r[5], r[5].includes("108") ? 46 : 43, 11.5)}</span><span class="c">${fit(r[6], 43, 11.5)}</span>
            <span class="c over">${fit(r[7] + (r[7] === G1 ? " ZNF" : r[7] === G2 ? " ZN" : ""), r[7] === G1 ? 872 : r[7] === G2 ? 872 : r[8], 11.5)}</span></div>`)}
        </div>
      </div>`;
  }
}

function spiral(cx: number, cy: number, r: number) {
  let d = "";
  for (let i = 0; i <= 130; i++) {
    const t = i / 130, a = t * Math.PI * 2 * 3.25 + Math.PI * 0.05, q = 0.6 + t * (r - 1);
    d += `${i ? "L" : "M"}${(cx + Math.cos(a) * q).toFixed(2)} ${(cy + Math.sin(a) * q).toFixed(2)}`;
  }
  return d;
}
